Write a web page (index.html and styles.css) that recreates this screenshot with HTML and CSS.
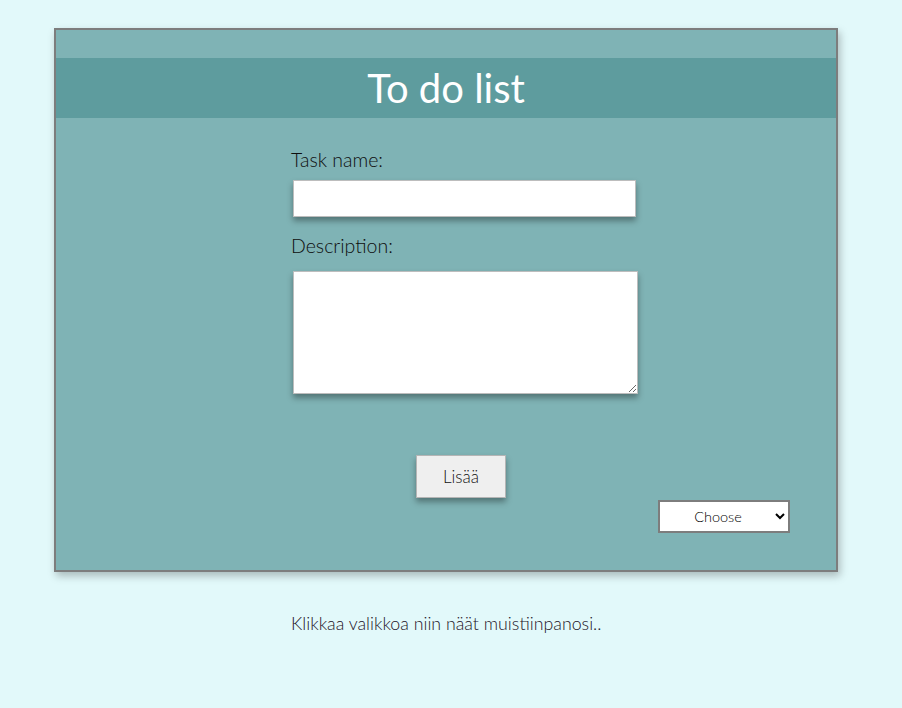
FILE: index.html
```html
<!DOCTYPE html>
<html lang="fi">
<head>
<meta charset="utf-8">
<title>To do list</title>
<link rel="stylesheet" href="styles.css">
</head>
<body>
<div class="card">
  <header class="band"><h1 class="title">To do list</h1></header>
  <form class="form">
    <label class="label" for="task">Task name:</label>
    <input class="input" id="task" type="text">
    <label class="label label-desc" for="desc">Description:</label>
    <textarea class="area" id="desc"></textarea>
    <div class="btn-row"><button class="btn" type="button">Lisää</button></div>
    <div class="select-row">
      <select class="select"><option>Choose</option></select>
    </div>
  </form>
</div>
<p class="note">Klikkaa valikkoa niin näät muistiinpanosi..</p>
</body>
</html>
```
FILE: styles.css
```css
html, body { margin: 0; padding: 0; }
body {
  background: #e2f9fa;
  font-family: Lato, "Open Sans", sans-serif;
  font-weight: 300;
  color: #111;
  padding-top: 28px;
  height: 680px;
}
.card {
  box-sizing: border-box;
  width: 784px;
  height: 544px;
  margin-left: 54px;
  border: 2px solid #7d7d7d;
  background: #7fb3b5;
  padding-top: 28px;
  box-shadow: 2px 4px 8px rgba(0,0,0,0.25);
}
.band {
  background: #5e9c9e;
  height: 60px;
  display: flex;
  align-items: center;
  justify-content: center;
}
.title {
  margin: 0;
  font-weight: 400;
  font-size: 40px;
  color: #fff;
  line-height: 60px;
}
.form {
  display: flex;
  flex-direction: column;
  align-items: flex-start;
  padding-left: 235px;
  padding-top: 30px;
}
.label {
  font-size: 19.5px;
  line-height: 24px;
  color: #0e0e0e;
}
.input {
  box-sizing: border-box;
  margin: 8px 0 0 2px;
  width: 343px;
  height: 37px;
  border: 1px solid #bdbdbd;
  background: #fff;
  box-shadow: 0 4px 6px rgba(0,0,0,0.35);
}
.label-desc { margin-top: 17px; }
.area {
  box-sizing: border-box;
  margin: 13px 0 0 2px;
  width: 345px;
  height: 123px;
  border: 1px solid #bdbdbd;
  background: #fff;
  box-shadow: 0 4px 6px rgba(0,0,0,0.35);
  resize: both;
}
.btn-row {
  width: 345px;
  display: flex;
  justify-content: center;
  margin-top: 61px;
}
.btn {
  box-sizing: border-box;
  width: 90px;
  height: 43px;
  margin-left: -5px;
  font-family: Lato, sans-serif;
  font-weight: 300;
  font-size: 17px;
  color: #111;
  background: #efefef;
  border: 1px solid #b5b5b5;
  box-shadow: 0 4px 6px rgba(0,0,0,0.35);
}
.select-row {
  align-self: stretch;
  display: flex;
  justify-content: flex-end;
  padding-right: 46px;
  margin-top: 2px;
}
.select {
  box-sizing: border-box;
  width: 132px;
  height: 33px;
  border: 2px solid #7d7d7d;
  border-radius: 0;
  background: #fff;
  font-family: Lato, sans-serif;
  font-weight: 300;
  font-size: 14.5px;
  color: #000;
  text-align: center;
  text-align-last: center;
}
.note {
  margin: 41px 0 0 291px;
  font-size: 17.8px;
  line-height: 20px;
  color: #1e1428;
}
```
